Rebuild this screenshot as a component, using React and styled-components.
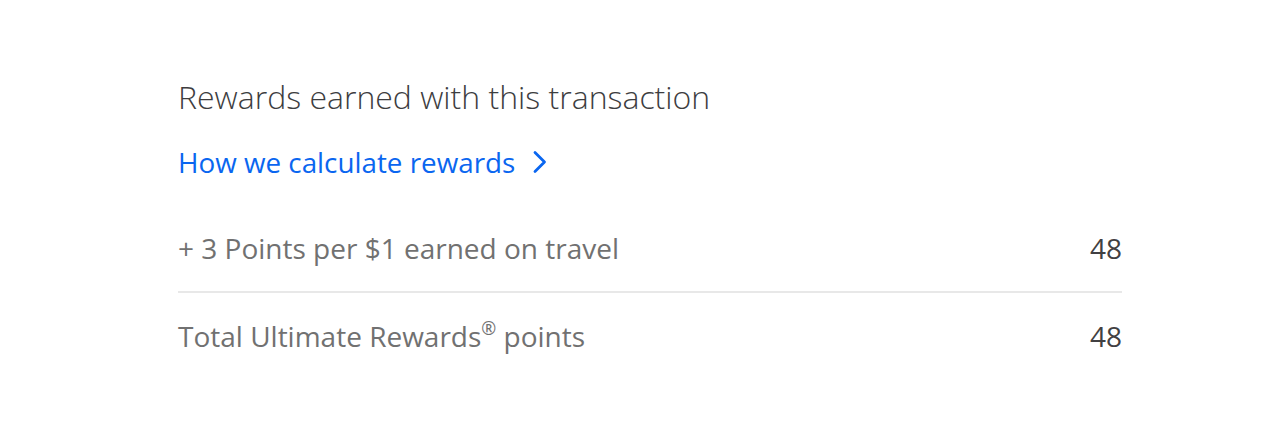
import styled, { createGlobalStyle } from "styled-components";

const GlobalStyle = createGlobalStyle`
  html, body {
    margin: 0;
    padding: 0;
    background: #ffffff;
  }
  body {
    font-family: "Open Sans", "Liberation Sans", sans-serif;
  }
`;

const rows = [
  { label: "+ 3 Points per $1 earned on travel", value: "48" },
  { label: "Total Ultimate Rewards", mark: true, value: "48" },
];

export default function App() {
  return (
    <>
      <GlobalStyle />
      <Page>
        <Panel>
          <Title>Rewards earned with this transaction</Title>
          <RewardsLink href="#">
            How we calculate rewards
            <Chevron viewBox="0 0 16 24" aria-hidden="true">
              <path d="M3 2.5 L12.5 12 L3 21.5" />
            </Chevron>
          </RewardsLink>
          <List>
            {rows.map((row, i) => (
              <Row key={i} $last={i === rows.length - 1}>
                <Label>
                  {row.label}
                  {row.mark && (
                    <>
                      <sup>®</sup> points
                    </>
                  )}
                </Label>
                <Value>{row.value}</Value>
              </Row>
            ))}
          </List>
        </Panel>
      </Page>
    </>
  );
}

const Page = styled.main`
  padding: 77px 159px 0 178px;
`;

const Panel = styled.section`
  width: 944px;
`;

const Title = styled.h2`
  margin: 0;
  font-weight: 300;
  font-size: 32px;
  line-height: 40px;
  color: #3d3d3f;
`;

const RewardsLink = styled.a`
  display: inline-flex;
  align-items: center;
  margin-top: 27px;
  font-size: 27.8px;
  line-height: 36px;
  color: #0a66f0;
  text-decoration: none;
`;

const Chevron = styled.svg`
  width: 16px;
  height: 24px;
  margin-left: 17px;
  fill: none;
  stroke: #0a66f0;
  stroke-width: 2.8;
  stroke-linecap: round;
  stroke-linejoin: round;
`;

const List = styled.div`
  margin-top: 50px;
`;

const Row = styled.div`
  display: flex;
  justify-content: space-between;
  align-items: center;
  padding: ${({ $last }) => ($last ? "25px 0" : "0 0 25px")};
  border-bottom: ${({ $last }) => ($last ? "none" : "2px solid #e8e8e8")};
`;

const Label = styled.span`
  font-size: 28px;
  line-height: 36px;
  color: #717171;

  sup {
    font-size: 18px;
    line-height: 0;
    vertical-align: 12px;
  }
`;

const Value = styled.span`
  font-size: 28px;
  line-height: 36px;
  color: #414042;
`;
